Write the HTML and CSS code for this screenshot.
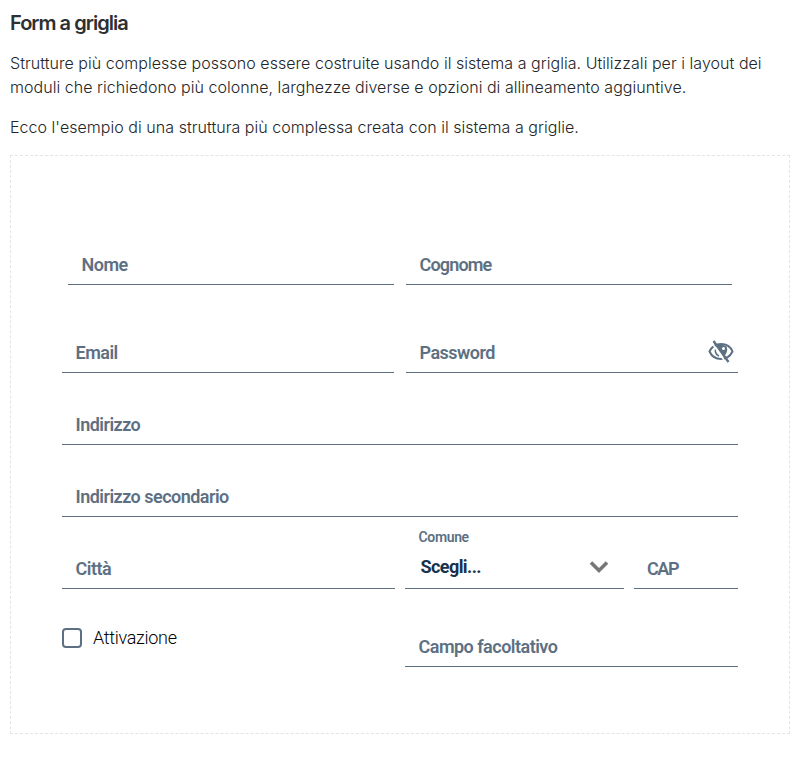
FILE: index.html
```html
<!DOCTYPE html>
<html lang="it">
<head>
<meta charset="utf-8">
<title>Form a griglia</title>
<link rel="stylesheet" href="styles.css">
</head>
<body>
<h4>Form a griglia</h4>
<p>Strutture più complesse possono essere costruite usando il sistema a griglia. Utilizzali per i layout dei moduli che richiedono più colonne, larghezze diverse e opzioni di allineamento aggiuntive.</p>
<p>Ecco l'esempio di una struttura più complessa creata con il sistema a griglie.</p>
<form class="example">
  <div class="row names">
    <div class="field"><label><span>Nome</span></label></div>
    <div class="field surname"><label><span>Cognome</span></label></div>
  </div>
  <div class="row account">
    <div class="field"><label><span>Email</span></label></div>
    <div class="field"><label><span>Password</span></label>
      <svg class="eye" viewBox="0 0 26 24" width="26" height="24">
        <path d="M1.500 11.500C4 6.300 8 4 13 4s9.500 2.500 11.500 7.500C22 16.500 18 19 13 19S3.800 16.500 1.500 11.500Z" fill="none" stroke="currentColor" stroke-width="2"/>
        <path d="M9 5C11 4 15 4 18.500 6.500c1.500 3 .5 7-2.500 9.500Z" fill="currentColor"/>
        <path d="M7.800 8.500c-1 3 .2 6 3.200 7.500" fill="none" stroke="currentColor" stroke-width="1.600"/>
        <circle cx="15.500" cy="8.500" r="1.500" fill="#fff"/>
        <path d="M3.500 2.500 18 23" stroke="#fff" stroke-width="1.500"/>
        <path d="M5.500 1 20.500 22" stroke="currentColor" stroke-width="2.300"/>
      </svg>
    </div>
  </div>
  <div class="row"><div class="field"><label><span>Indirizzo</span></label></div></div>
  <div class="row"><div class="field"><label><span>Indirizzo secondario</span></label></div></div>
  <div class="row place">
    <div class="field"><label><span>Città</span></label></div>
    <div class="field select">
      <div class="select-text"><label class="caption"><span>Comune</span></label><div class="value"><span>Scegli...</span></div></div>
      <svg class="chevron" viewBox="0 0 20 14" width="20" height="14"><path d="M2 2.500 10 10.500 18 2.500" fill="none" stroke="currentColor" stroke-width="3.600"/></svg>
    </div>
    <div class="field cap"><label><span>CAP</span></label></div>
  </div>
  <div class="row last">
    <label class="check"><i class="box"></i><span>Attivazione</span></label>
    <div class="field"><label><span>Campo facoltativo</span></label></div>
  </div>
</form>
</body>
</html>
```
FILE: styles.css
```css
* { box-sizing: border-box; }
body { margin: 0; padding: 11px 10px 0; background: #fff; color: #232527; font: 350 16px/24px Inter, sans-serif; letter-spacing: .04px; }
h4 { margin: 0 0 16px; color: #2d2f32; font-size: 20px; line-height: 24px; font-weight: 600; letter-spacing: -.97px; }
p { margin: 0 0 16px; }
.example { height: 579px; border: 1px dashed #e4e4e4; padding: 84px 51px 0; color: #5d7083; font: 600 18px/28px Roboto, sans-serif; letter-spacing: -.52px; }
.row { display: grid; height: 72px; align-items: start; }
.field { height: 45px; border-bottom: 1px solid #5d7083; padding: 11px 14px 0 13.500px; display: flex; justify-content: space-between; }
.names { grid-template-columns: 1fr 1fr; gap: 12px; margin: 0 6px; height: 88px; }
.surname { letter-spacing: -.84px; }
.account { grid-template-columns: 1fr 1fr; gap: 12px; }
.account .field { padding-right: 4px; }
.eye { margin-top: 1px; }
.place { grid-template-columns: 333px 219px 104px; gap: 10px; height: 78px; }
.place .cap { padding-left: 13px; letter-spacing: -1.400px; }
.select { height: 61px; margin-top: -16px; padding-top: 0; }
.caption { display: block; font-size: 14px; line-height: 18px; letter-spacing: -.35px; }
.value { margin: 7px 0 0 2px; color: #17324d; font-weight: 700; letter-spacing: -.58px; }
.chevron { color: #777; margin: 32px 1px 0 0; }
.last { grid-template-columns: 333px 333px; gap: 10px; }
.check { display: flex; align-items: center; color: #000; font-weight: 300; letter-spacing: -.3px; gap: 11px; padding-top: 2px; }
.box { width: 20px; height: 20px; border: 2px solid #5d7083; border-radius: 4px; }
```
